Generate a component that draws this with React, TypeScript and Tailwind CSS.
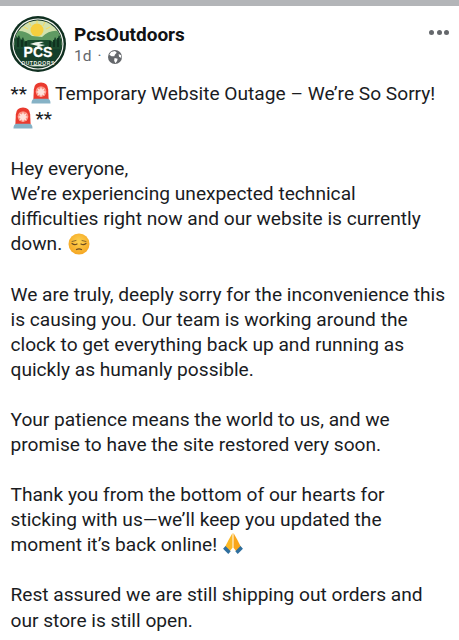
import { ReactNode } from 'react';

function Logo() {
  return (
    <svg width="58" height="58" viewBox="0 0 58 58" className="shrink-0">
      <defs>
        <clipPath id="inner">
          <circle cx="29" cy="29" r="23.5" />
        </clipPath>
      </defs>
      <circle cx="29" cy="29" r="28" fill="#0f2f20" />
      <circle cx="29" cy="29" r="25.6" fill="#f4f6f0" />
      <circle cx="29" cy="29" r="24.4" fill="#123524" />
      <g clipPath="url(#inner)">
        <rect x="0" y="0" width="58" height="30" fill="#d3e2ae" />
        <circle cx="28" cy="15" r="6.5" fill="#f7cf3f" />
        <path d="M28 5v4M20 7l2 4M36 7l-2 4M15 12l4 2M41 12l-4 2" stroke="#f1dc6a" strokeWidth="1.2" />
        <path d="M4 17 Q14 14 23 21 L33 22 Q42 13 54 17 L54 36 L4 36Z" fill="#5f9a62" />
        <path d="M4 44V21l2-4 2 6 2-3 2 5 2-3 2 5 3-2 22 0 3 2 2-5 2 3 2-5 2 3 2-6 2 4v23z" fill="#1a4a2e" />
        <path d="M9 32V23M13 32V25M17 32V26M41 32V26M45 32V25M49 32V23" stroke="#0e2c1c" strokeWidth="1.6" />
        <rect x="0" y="34" width="58" height="24" fill="#153f2a" />
        <path d="M21 29 Q29 26 35 27 L30 29 L36 30 L24 34 L29 31z" fill="#eef2ea" />
        <path d="M16 52 Q29 49 42 52" stroke="#dfe8dc" strokeWidth="1.5" fill="none" />
      </g>
      <text x="29" y="42" textAnchor="middle" fontFamily="'Liberation Sans', sans-serif" fontWeight="700" fontSize="14" fill="#fff" stroke="#fff" strokeWidth=".3">
        PCS
      </text>
      <text x="29" y="49.5" textAnchor="middle" fontFamily="'Liberation Sans', sans-serif" fontWeight="700" fontSize="5" letterSpacing=".6" fill="#e9eee6">
        OUTDOORS
      </text>
    </svg>
  );
}

function Globe() {
  return (
    <svg width="14" height="14" viewBox="0 0 16 16">
      <circle cx="8" cy="8" r="8" fill="#65686c" />
      <path d="M3.5 2.2 L8 1 L10 3 L8 5.2 L7.2 7.2 L4 7 L1.5 5.5 Z M7.5 9 L11 10 L10.4 12.5 L8.4 15 L7 12 Z M12.2 4.5 L15 6 L15.2 9 L12.6 7.6 Z" fill="#fff" />
    </svg>
  );
}

function Siren() {
  return (
    <svg width="20" height="22" viewBox="0 0 21 23" className="inline-block align-[-4px]">
      <path d="M2.5 18 L3 7.5 Q3.5 0.5 10.5 0.5 Q17.5 0.5 18 7.5 L18.5 18Z" fill="#ea3a2e" />
      <circle cx="10.5" cy="10" r="5.6" fill="#fb8f7f" />
      <path d="M10.5 5l1.1 2.8 2.8-1.2-1.2 2.8 2.8 1.1-2.8 1.1 1.2 2.8-2.8-1.2-1.1 2.8-1.1-2.8-2.8 1.2 1.2-2.8-2.8-1.1 2.8-1.1-1.2-2.8 2.8 1.2z" fill="#ffe3dc" />
      <path d="M0.5 22.5 Q0.5 17.5 4 17.5 H17 Q20.5 17.5 20.5 22.5Z" fill="#86b2c6" />
    </svg>
  );
}

function Pensive() {
  return (
    <svg width="22" height="22" viewBox="0 0 22 22" className="inline-block align-[-5px]">
      <defs>
        <radialGradient id="face" cx="50%" cy="40%" r="60%">
          <stop offset="0%" stopColor="#fdd250" />
          <stop offset="100%" stopColor="#f5a623" />
        </radialGradient>
      </defs>
      <circle cx="11" cy="11" r="10.5" fill="url(#face)" />
      <path d="M4 8.5 L8 7.5 M14 7.5 L18 8.5" stroke="#8a6a2a" strokeWidth="1" fill="none" strokeLinecap="round" />
      <path d="M4 10.5 Q6.5 12.5 9 11 M13 11 Q15.5 12.5 18 10.5" stroke="#6d4c21" strokeWidth="1.2" fill="none" strokeLinecap="round" />
      <path d="M8.5 16.5 Q11 15.2 13.5 16.5" stroke="#6d4c21" strokeWidth="1.3" fill="none" strokeLinecap="round" />
    </svg>
  );
}

function Pray() {
  return (
    <svg width="22" height="23" viewBox="0 0 20 22" className="inline-block align-[-4px]">
      <path d="M9.5 1 L9.5 15 L6.5 19 L2 15 Q6 7 9.5 1Z" fill="#fbb825" />
      <path d="M10.5 1 L10.5 15 L13.5 19 L18 15 Q14 7 10.5 1Z" fill="#f9a51a" />
      <path d="M0.5 16 L2.8 13.5 L7.8 18.5 L5.5 21 Z M19.5 16 L17.2 13.5 L12.2 18.5 L14.5 21 Z" fill="#2f6f9f" />
    </svg>
  );
}

function Para({ children }: { children: ReactNode }) {
  return <p className="mb-[25px]">{children}</p>;
}

export default function App() {
  return (
    <div className="w-[459px] h-[640px] overflow-hidden bg-white font-['Roboto',sans-serif] text-[#1c1e21]">
      <div className="h-[6px] bg-[#b3b5b8]" />

      <div className="flex items-start pl-[9px] pr-[10px] pt-[9px]">
        <Logo />
        <div className="ml-[7px] flex-1 pt-[8px]">
          <div className="text-[19px] leading-[24px] font-bold text-[#101214]">PcsOutdoors</div>
          <div className="flex items-center gap-[6px] text-[15.5px] leading-[19px] text-[#65686c]">
            <span>1d</span>
            <span>·</span>
            <Globe />
          </div>
        </div>
        <div className="flex gap-[2.5px] pt-[15px]">
          <span className="size-[5px] rounded-full bg-[#65686c]" />
          <span className="size-[5px] rounded-full bg-[#65686c]" />
          <span className="size-[5px] rounded-full bg-[#65686c]" />
        </div>
      </div>

      <div className="pl-[10.5px] pr-[8px] pt-[8px] text-[19.15px] leading-[25.1px] text-[#1a1c1f]">
        <Para>
          ** <span className="ml-[-1px]"><Siren /></span> <span className="ml-[-0.5px]">Temporary Website Outage – We’re So Sorry!</span>
          <br />
          <span className="ml-[2px] mr-[3px]"><Siren /></span>**
        </Para>
        <Para>
          Hey everyone,
          <br />
          We’re experiencing unexpected technical
          <br />
          difficulties right now and our website is currently
          <br />
          down. <span className="ml-[1px]"><Pensive /></span>
        </Para>
        <Para>
          We are truly, deeply sorry for the inconvenience this
          <br />
          is causing you. Our team is working around the
          <br />
          clock to get everything back up and running as
          <br />
          quickly as humanly possible.
        </Para>
        <Para>
          Your patience means the world to us, and we
          <br />
          promise to have the site restored very soon.
        </Para>
        <Para>
          Thank you from the bottom of our hearts for
          <br />
          sticking with us—we’ll keep you updated the
          <br />
          moment it’s back online! <Pray />
        </Para>
        <p>
          Rest assured we are still shipping out orders and
          <br />
          our store is still open.
        </p>
      </div>
    </div>
  );
}
